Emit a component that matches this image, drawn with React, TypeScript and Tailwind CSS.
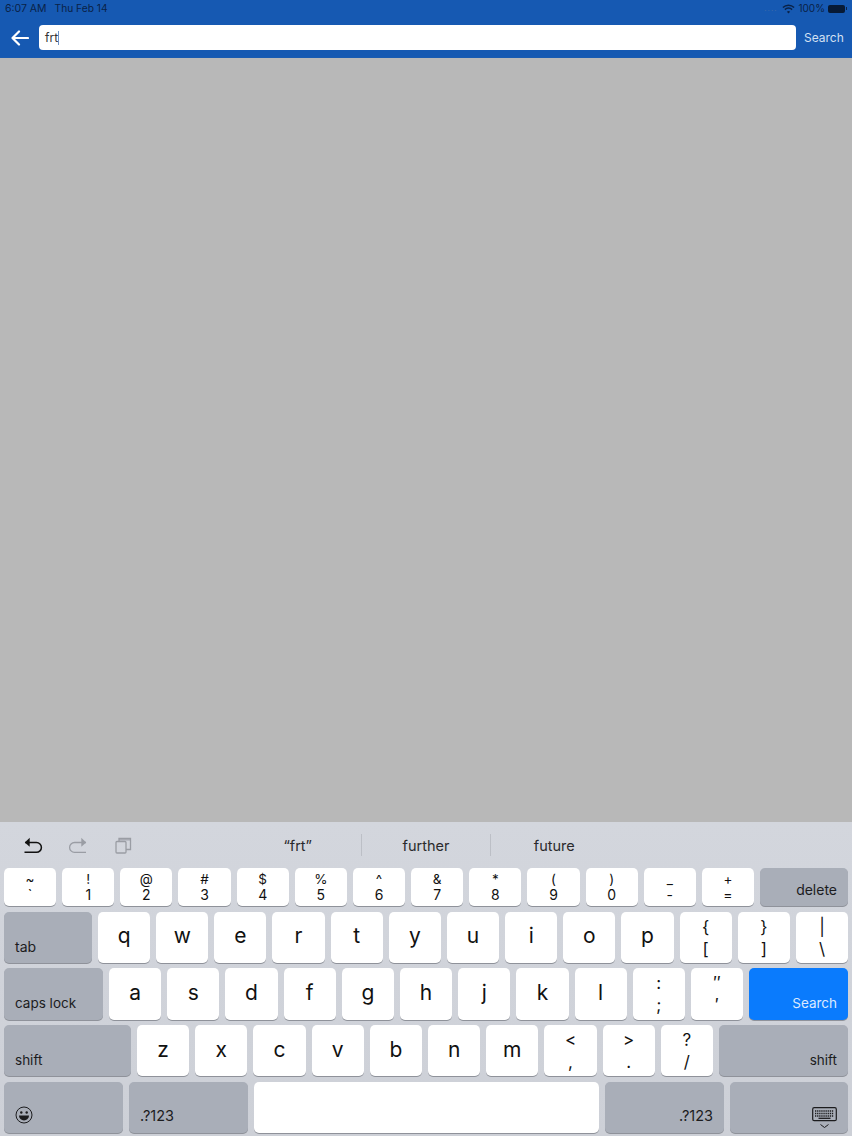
import React from "react";

const font = "font-['Inter','Liberation_Sans',sans-serif]";

function Two({ t, b }: { t: string; b: string }) {
  return (
    <div className="flex-1 min-w-0 h-full bg-white rounded-[5px] shadow-[0_1px_0_#8f929a] flex flex-col items-center justify-start text-[#111]">
      <span className="text-[13.5px] leading-[16px] mt-[3px]">{t}</span>
      <span className="text-[14px] leading-[16px] mt-0">{b}</span>
    </div>
  );
}

function Big({ t, b }: { t: string; b: string }) {
  return (
    <div className="flex-1 min-w-0 h-full bg-white rounded-[5px] shadow-[0_1px_0_#8f929a] flex flex-col items-center text-[#111]">
      <span className="text-[17px] leading-[20px] mt-[5px]">{t}</span>
      <span className="text-[17px] leading-[20px] mt-[2px]">{b}</span>
    </div>
  );
}

function Letter({ c, top }: { c: string; top: string }) {
  return (
    <div className={`flex-1 min-w-0 h-full bg-white rounded-[5px] shadow-[0_1px_0_#8f929a] flex justify-center ${top} text-[21px] leading-[25px] text-[#111]`}>
      {c}
    </div>
  );
}

function Gray({ w, label, right, children, size = "text-[13.5px]", pb = "pb-[7px]" }: { w: string; label?: string; right?: boolean; children?: React.ReactNode; size?: string; pb?: string }) {
  return (
    <div className={`${w} shrink-0 h-full bg-[#a9aeb8] rounded-[5px] shadow-[0_1px_0_#8f929a] flex items-end ${pb} ${size} leading-[18px] text-[#1c1c1e] px-[11px] ${right ? "justify-end" : "justify-start"}`}>
      {label}
      {children}
    </div>
  );
}

const row1: [string, string][] = [["~", "`"], ["!", "1"], ["@", "2"], ["#", "3"], ["$", "4"], ["%", "5"], ["^", "6"], ["&", "7"], ["*", "8"], ["(", "9"], [")", "0"], ["_", "-"], ["+", "="]];

export default function App() {
  return (
    <div className={`w-[852px] h-[1136px] flex flex-col overflow-hidden bg-[#b8b8b8] ${font}`}>
      {/* Status bar + search bar */}
      <header className="h-[58px] shrink-0 bg-[#1659b2] border-b border-[#1a5bb0]">
        <div className="h-[25px] flex items-start justify-between pl-[5px] pr-[5px] pt-[2px] text-[10.5px] leading-[13px] text-[#0a2247]">
          <div className="flex gap-[8px]">
            <span>6:07 AM</span>
            <span className="text-[10.2px]">Thu Feb 14</span>
          </div>
          <div className="flex items-center">
            <span className="text-[#3f6ba8] text-[8px] leading-[13px] tracking-[1px] mr-[5px]">....</span>
            <svg width="13" height="10" viewBox="0 0 13 10" className="mr-[3px]" fill="none" stroke="#0a2247" strokeWidth="1.5">
              <path d="M.9 3.5a8 8 0 0 1 11.2 0" />
              <path d="M2.9 5.6a5.1 5.1 0 0 1 7.2 0" />
              <path d="M6.5 9.6 4.9 7.8a2.3 2.3 0 0 1 3.2 0z" fill="#0a2247" stroke="none" />
            </svg>
            <span className="mr-[3px] text-[10px]">100%</span>
            <div className="w-[17px] h-[8px] rounded-[2px] bg-[#071a35]" />
            <div className="w-[1px] h-[3px] bg-[#0a2247] ml-[1px]" />
          </div>
        </div>
        <div className="flex items-center h-[25px]">
          <div className="w-[39px] shrink-0 flex justify-center">
            <svg width="18" height="16" viewBox="0 0 18 16" fill="none" stroke="#fff" strokeWidth="2.2" strokeLinecap="round" strokeLinejoin="round">
              <path d="M1.5 8h15.5M8 1.5 1.5 8 8 14.5" />
            </svg>
          </div>
          <div className="w-[757px] h-[25px] shrink-0 bg-white rounded-[4px] flex items-center pl-[6px] text-[12px] text-[#333]">
            <span>frt</span>
            <span className="inline-block w-[1px] h-[14px] bg-[#6f93c8]" />
          </div>
          <span className="ml-[8px] mt-[1px] text-[12px] text-[#d3e0f2]">Search</span>
        </div>
      </header>

      <main className="flex-1" />

      {/* Keyboard */}
      <section className="h-[314px] shrink-0 bg-gradient-to-b from-[#d3d6dd] to-[#cdd0d7] text-[#111]">
        <div className="h-[46px] relative flex items-center">
          <svg width="20" height="18" viewBox="0 0 20 18" fill="none" stroke="#111" strokeWidth="1.5" className="ml-[23px] mt-[2px]">
            <path d="M2 5.5h11.5a4.8 4.8 0 0 1 0 9.8H1.5" />
            <path d="M6.7.8 1.8 5.5l4.9 4.2z" fill="#111" stroke="none" />
          </svg>
          <svg width="20" height="18" viewBox="0 0 20 18" fill="none" stroke="#9a9da4" strokeWidth="1.3" className="ml-[25px] mt-[2px]">
            <path d="M18 5.5H6.5a4.8 4.8 0 0 0 0 9.8H18" />
            <path d="M13.3.8l4.9 4.7-4.9 4.2z" fill="#9a9da4" stroke="none" />
          </svg>
          <svg width="17" height="17" viewBox="0 0 17 17" fill="none" stroke="#9a9da4" strokeWidth="1.3" className="ml-[27px]">
            <rect x="1" y="4.5" width="10" height="11.5" rx="1" />
            <path d="M4 4.5V1.5h11.5v11H11" />
            <path d="M4 3h11.5M4 2h11.5" strokeWidth=".8" />
          </svg>
          <div className="absolute left-[234px] top-[0px] w-[384px] h-[46px] flex items-center text-[14.5px] text-[#2a2a2c]">
            <div className="flex-1 text-center pt-[2px]">“frt”</div>
            <div className="w-[1px] h-[22px] bg-[#bcbfc6]" />
            <div className="flex-1 text-center pt-[2px]">further</div>
            <div className="w-[1px] h-[22px] bg-[#bcbfc6]" />
            <div className="flex-1 text-center pt-[2px]">future</div>
          </div>
        </div>
        <div className="flex flex-col gap-[5px] px-[4px]">
          <div className="flex gap-[6px] h-[38px] mb-[1px]">
            {row1.map(([t, b]) => <Two key={b} t={t} b={b} />)}
            <Gray w="w-[88px]" label="delete" right size="text-[14px]" />
          </div>
          <div className="flex gap-[6px] h-[51px]">
            <Gray w="w-[88px]" label="tab" size="text-[14px]" />
            {"qwertyuiop".split("").map((c) => <Letter key={c} c={c} top="pt-[11px]" />)}
            <Big t="{" b="[" />
            <Big t="}" b="]" />
            <Big t="|" b="\" />
          </div>
          <div className="flex gap-[6px] h-[52px]">
            <Gray w="w-[99px]" label="caps lock" pb="pb-[8px]" />
            {"asdfghjkl".split("").map((c) => <Letter key={c} c={c} top="pt-[12px]" />)}
            <Big t=":" b=";" />
            <Big t="″" b="′" />
            <div className="w-[99px] shrink-0 h-full bg-[#0a7bfd] rounded-[5px] shadow-[0_1px_0_#8f929a] flex items-end justify-end pb-[8px] pr-[11px] text-[13.5px] leading-[18px] text-[#dbeaff]">Search</div>
          </div>
          <div className="flex gap-[6px] h-[51px] mb-[1px]">
            <Gray w="w-[127px]" label="shift" />
            {"zxcvbnm".split("").map((c) => <Letter key={c} c={c} top="pt-[12px]" />)}
            <Big t="<" b="," />
            <Big t=">" b="." />
            <Big t="?" b="/" />
            <Gray w="w-[129px]" label="shift" right />
          </div>
          <div className="flex gap-[6px] h-[51px]">
            <Gray w="w-[119px]" pb="pb-[8px]">
              <svg width="18" height="18" viewBox="0 0 18 18" fill="none" stroke="#1c1c1e" strokeWidth="1" className="mb-[1px]">
                <circle cx="9" cy="9" r="8" />
                <circle cx="6.3" cy="6.5" r="1.2" fill="#1c1c1e" stroke="none" />
                <circle cx="11.7" cy="6.5" r="1.2" fill="#1c1c1e" stroke="none" />
                <path d="M4 9.5h10a5 5 0 0 1-10 0z" fill="#1c1c1e" stroke="none" />
              </svg>
            </Gray>
            <Gray w="w-[119px]" label=".?123" size="text-[14.5px]" pb="pb-[8px]" />
            <div className="flex-1 min-w-0 h-full bg-white rounded-[5px] shadow-[0_1px_0_#8f929a]" />
            <Gray w="w-[119px]" label=".?123" right size="text-[14.5px]" pb="pb-[8px]" />
            <Gray w="w-[118px]" right pb="pb-[8px]">
              <svg width="25" height="22" viewBox="0 0 25 22" fill="none" className="mb-[-4px]">
                <rect x=".7" y=".7" width="23.6" height="13" rx="1.5" stroke="#1c1c1e" strokeWidth="1.2" />
                <path d="M3 4h19M3 6.5h19M3 9h19" stroke="#1c1c1e" strokeWidth="1.3" strokeDasharray="1.3 .8" />
                <path d="M6.5 11.3h12" stroke="#1c1c1e" strokeWidth="1.3" />
                <path d="M8.5 17.5l4 3 4-3" stroke="#1c1c1e" strokeWidth="1" />
              </svg>
            </Gray>
          </div>
        </div>
      </section>
    </div>
  );
}
